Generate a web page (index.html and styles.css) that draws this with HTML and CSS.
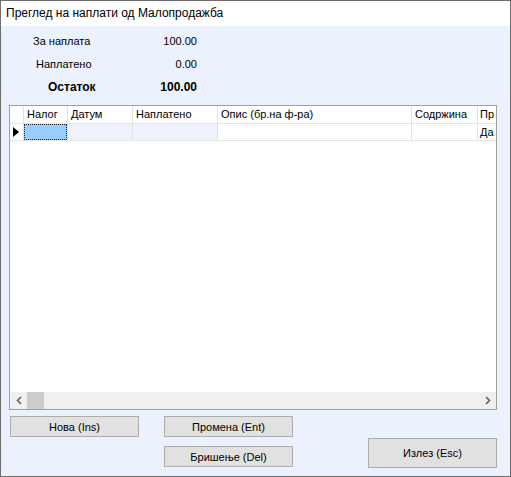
FILE: index.html
```html
<!DOCTYPE html>
<html>
<head>
<meta charset="utf-8">
<link rel="stylesheet" href="styles.css">
</head>
<body>
<div class="window">
  <div class="titlebar">Преглед на наплати од Малопродажба</div>
  <div class="content">
    <div class="summary">
      <div class="srow"><span class="slabel l1">За наплата</span><span class="sval">100.00</span></div>
      <div class="srow"><span class="slabel l2">Наплатено</span><span class="sval">0.00</span></div>
      <div class="srow bold"><span class="slabel l3">Остаток</span><span class="sval">100.00</span></div>
    </div>
    <div class="grid">
      <div class="table">
        <div class="cell hdr rh"></div>
        <div class="cell hdr">Налог</div>
        <div class="cell hdr">Датум</div>
        <div class="cell hdr">Наплатено</div>
        <div class="cell hdr">Опис (бр.на ф-ра)</div>
        <div class="cell hdr">Содржина</div>
        <div class="cell hdr last">Пр</div>
        <div class="cell rh"><span class="tri"></span></div>
        <div class="cell sel"><span class="focus"></span></div>
        <div class="cell tint"></div>
        <div class="cell tint"></div>
        <div class="cell"></div>
        <div class="cell"></div>
        <div class="cell last">Да</div>
      </div>
      <div class="gridbody"></div>
      <div class="hscroll">
        <div class="sbtn"><svg width="8" height="9" viewBox="0 0 8 9"><path d="M6 1 L2.5 4.5 L6 8" fill="none" stroke="#606060" stroke-width="1.6"/></svg></div>
        <div class="thumb"></div>
        <div class="strack"></div>
        <div class="sbtn"><svg width="8" height="9" viewBox="0 0 8 9"><path d="M2 1 L5.5 4.5 L2 8" fill="none" stroke="#606060" stroke-width="1.6"/></svg></div>
      </div>
    </div>
    <div class="buttons">
      <div class="bcol c1"><div class="btn">Нова (Ins)</div></div>
      <div class="bcol c2"><div class="btn">Промена (Ent)</div><div class="btn">Бришење (Del)</div></div>
      <div class="bcol c3"><div class="btn big">Излез (Esc)</div></div>
    </div>
  </div>
</div>
</body>
</html>
```
FILE: styles.css
```css
* { box-sizing: border-box; }
html, body { margin: 0; padding: 0; background: #ffffff; }
body { font-family: "Liberation Sans", Arial, sans-serif; font-size: 11px; color: #000; }
.window {
  width: 511px; height: 477px;
  border: 1px solid #6e6e6e;
  display: flex; flex-direction: column;
  background: #ebf1fd;
}
.titlebar {
  height: 25px; background: #ffffff;
  font-family: "Liberation Sans", Arial, sans-serif;
  font-size: 12px; line-height: 25px; padding-left: 5px;
  color: #000;
}
.content { flex: 1; display: flex; flex-direction: column; }
.summary { padding-top: 3px; }
.srow { height: 23px; width: 196px; display: flex; align-items: center; }
.srow.bold { height: 24px; font-weight: bold; font-size: 12px; }
.l1 { margin-left: 32px; }
.l2 { margin-left: 35px; }
.l3 { margin-left: 47px; }
.sval { margin-left: auto; white-space: nowrap; }
.grid {
  margin: 6px 0 0 8px; width: 488px; height: 305px;
  border: 1px solid #a0a0a0; background: #ffffff;
  display: flex; flex-direction: column; overflow: hidden;
}
.table {
  display: grid;
  grid-template-columns: 14px 44px 65px 85px 194px 66px 1fr;
  grid-template-rows: 18px 17px;
}
.cell {
  border-right: 1px solid #e3e3e3; border-bottom: 1px solid #e3e3e3;
  overflow: hidden; white-space: nowrap; padding-left: 3px;
  line-height: 17px; position: relative;
}
.cell.last { border-right: none; padding-left: 2px; }
.cell.rh { padding: 0; }
.tri {
  position: absolute; left: 3px; top: 3px;
  width: 0; height: 0;
  border-top: 5px solid transparent; border-bottom: 5px solid transparent;
  border-left: 6px solid #000;
}
.sel { background: #99ccff; }
.focus {
  position: absolute; left: 0; top: 0; right: 0; bottom: 0;
  border: 1px dotted #222;
}
.tint { background: #eef3fd; }
.gridbody { flex: 1; }
.hscroll { height: 17px; display: flex; background: #f0f0f0; }
.sbtn { width: 17px; display: flex; align-items: center; justify-content: center; }
.thumb { width: 17px; background: #cdcdcd; }
.strack { flex: 1; }
.buttons { display: flex; margin-top: 6px; }
.bcol { display: flex; flex-direction: column; gap: 9px; }
.c1 { margin-left: 9px; }
.c2 { margin-left: 25px; }
.c3 { margin-left: 75px; padding-top: 22px; }
.btn {
  width: 129px; height: 21px;
  background: #e1e1e1; border: 1px solid #adadad;
  display: flex; align-items: center; justify-content: center;
  font-size: 11px;
}
.btn.big { height: 30px; }
```
